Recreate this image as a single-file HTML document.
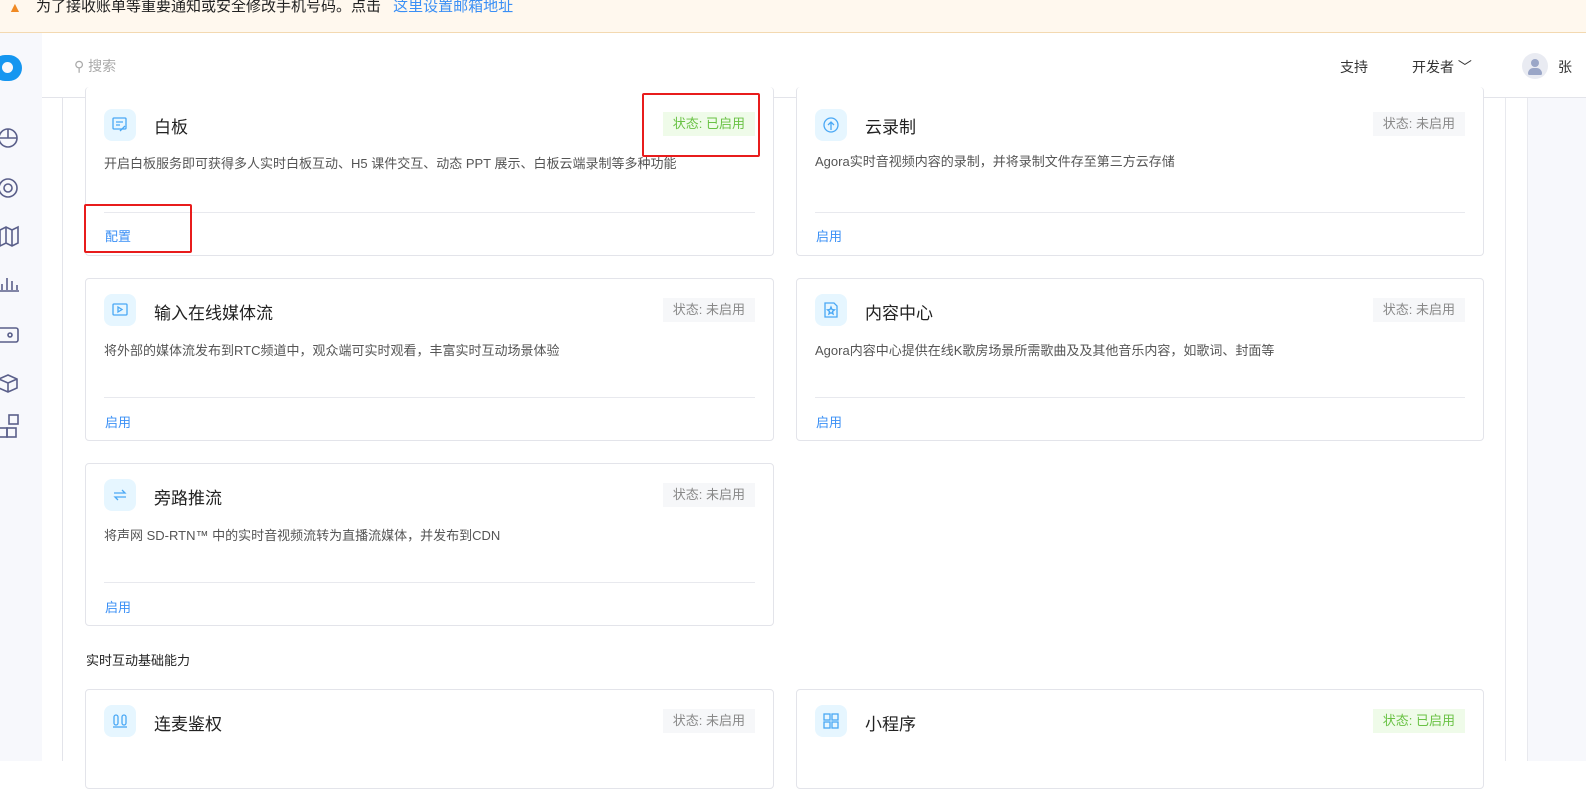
<!DOCTYPE html><html><head><meta charset="utf-8"><style>
*{margin:0;padding:0;box-sizing:border-box}
body{width:1586px;height:761px;overflow:hidden;background:#fff;font-family:"Liberation Sans","Noto Sans CJK SC",sans-serif;position:relative;color:#333}
.ban{position:absolute;left:0;top:0;width:1586px;height:33px;background:#fff8ee;border-bottom:1px solid #f3d9b1;font-size:15px;line-height:14px;padding-left:36px;color:#222}
.ban a{color:#3a8ff5;margin-left:8px}
.side{position:absolute;left:0;top:33px;width:42px;height:728px;background:#f7f8fc}
.hdr{position:absolute;left:42px;top:33px;right:0;height:65px;border-bottom:1px solid #e3e4ea;background:#fff}
.card{position:absolute;border:1px solid #e3e4ea;border-radius:4px;background:#fff}
.ic{position:absolute;left:18px;top:15px;width:32px;height:32px;border-radius:8px;background:#e6f6ff}
.ic svg{position:absolute;left:8px;top:8px}
.t{position:absolute;left:68px;top:20px;font-size:17px;color:#222}
.st{position:absolute;right:18px;top:19px;height:24px;padding:0 10px;font-size:13px;line-height:24px;background:#f6f7f9;color:#888}
.st.on{background:#effbe9;color:#69c244}
.d{position:absolute;left:18px;top:61px;font-size:13px;color:#555}
.ln{position:absolute;left:18px;right:18px;top:118px;border-top:1px solid #e8e9ee}
.a{position:absolute;left:19px;top:133px;font-size:13px;color:#3a8ff5}
.red{position:absolute;border:2px solid #e81c1c;border-radius:2px}
.sv{position:absolute;left:0}
</style></head><body>
<div class="ban"><span style="position:absolute;left:8px;top:0;color:#f08a24;font-size:14px">▲</span>为了接收账单等重要通知或安全修改手机号码。点击 <a>这里设置邮箱地址</a></div>
<div class="side">
<div style="position:absolute;left:-8px;top:22px;width:30px;height:26px;background:#1596f0;border-radius:13px"></div><div style="position:absolute;left:2px;top:29px;width:11px;height:11px;background:#f7f8fc;border-radius:6px"></div>
<svg class="sv" style="top:90px" width="24" height="330" fill="none" stroke="#5a5f8a" stroke-width="1.6">
<circle cx="8" cy="15" r="9"/><path d="M8 6v9h9M-1 15h9"/>
<circle cx="8" cy="65" r="9"/><circle cx="8" cy="65" r="4"/>
<path d="M0 107l6-3 6 3 6-3v16l-6 3-6-3-6 3zM6 104v16M12 107v16"/>
<path d="M0 168h19M2 167v-6M7 167v-12M12 167v-9M17 167v-5"/>
<rect x="-2" y="205" width="20" height="14" rx="2"/><circle cx="10" cy="212" r="2"/>
<path d="M8 252l9 4v9l-9 4-9-4v-9zM-1 256l9 4 9-4M8 260v9"/>
<rect x="-2" y="305" width="9" height="9"/><rect x="7" y="305" width="9" height="9"/><rect x="9" y="292" width="9" height="9"/>
</svg></div>
<div class="hdr">
<span style="position:absolute;left:32px;top:23px;font-size:14px;color:#aaa">⚲ 搜索</span>
<span style="position:absolute;left:1298px;top:24px;font-size:14px;color:#333">支持</span>
<span style="position:absolute;left:1370px;top:24px;font-size:14px;color:#333">开发者 ﹀</span>
<div style="position:absolute;left:1480px;top:20px;width:26px;height:26px;border-radius:13px;background:#e9ebf2"><div style="position:absolute;left:9px;top:6px;width:8px;height:8px;border-radius:4px;background:#9aa6c7"></div><div style="position:absolute;left:6px;top:15px;width:14px;height:7px;border-radius:7px 7px 2px 2px;background:#9aa6c7"></div></div>
<span style="position:absolute;left:1516px;top:24px;font-size:14px">张</span></div>
<div style="position:absolute;left:62px;top:98px;width:1px;height:663px;background:#e3e4ea"></div>
<div style="position:absolute;left:1505px;top:98px;width:1px;height:663px;background:#e8e9ee"></div>
<div style="position:absolute;left:1527px;top:98px;width:59px;height:663px;background:#f7f8fc;border-left:1px solid #e8e9ee"></div>

<div class="card" style="left:85px;top:87px;width:689px;height:169px;border-top:none"><div class="ic" style="top:22px"><svg width="16" height="16" fill="none" stroke="#4aa8f5" stroke-width="1.3"><rect x="1" y="1" width="13" height="11" rx="1"/><path d="M4 5h7M4 8h4M8 14l5-5"/></svg></div><div class="t" style="top:26px">白板</div><div class="st on" style="top:25px">状态: 已启用</div><div class="d" style="top:66px">开启白板服务即可获得多人实时白板互动、H5 课件交互、动态 PPT 展示、白板云端录制等多种功能</div><div class="ln" style="top:125px"></div><div class="a" style="top:139px">配置</div></div>
<div class="card" style="left:796px;top:87px;width:688px;height:169px;border-top:none"><div class="ic" style="top:22px"><svg width="16" height="16" fill="none" stroke="#4aa8f5" stroke-width="1.3"><circle cx="8" cy="8" r="7"/><path d="M8 13V5M5 8l3-3 3 3"/></svg></div><div class="t" style="top:26px">云录制</div><div class="st" style="top:25px">状态: 未启用</div><div class="d" style="top:64px">Agora实时音视频内容的录制，并将录制文件存至第三方云存储</div><div class="ln" style="top:125px"></div><div class="a" style="top:139px">启用</div></div>

<div class="card" style="left:85px;top:278px;width:689px;height:163px"><div class="ic"><svg width="16" height="16" fill="none" stroke="#4aa8f5" stroke-width="1.3"><rect x="1" y="2" width="14" height="11" rx="1"/><path d="M6 5v5l4-2.5z"/></svg></div><div class="t">输入在线媒体流</div><div class="st">状态: 未启用</div><div class="d">将外部的媒体流发布到RTC频道中，观众端可实时观看，丰富实时互动场景体验</div><div class="ln"></div><div class="a">启用</div></div>
<div class="card" style="left:796px;top:278px;width:688px;height:163px"><div class="ic"><svg width="16" height="16" fill="none" stroke="#4aa8f5" stroke-width="1.3"><path d="M2 1h9l3 3v11H2z"/><path d="M8 5l1 2.5 2.5.3-2 1.7.6 2.5L8 10.7 5.9 12l.6-2.5-2-1.7L7 7.5z"/></svg></div><div class="t">内容中心</div><div class="st">状态: 未启用</div><div class="d">Agora内容中心提供在线K歌房场景所需歌曲及及其他音乐内容，如歌词、封面等</div><div class="ln"></div><div class="a">启用</div></div>
<div class="card" style="left:85px;top:463px;width:689px;height:163px"><div class="ic"><svg width="16" height="16" fill="none" stroke="#4aa8f5" stroke-width="1.3"><path d="M2 6h11l-3-3M14 10H3l3 3"/></svg></div><div class="t">旁路推流</div><div class="st">状态: 未启用</div><div class="d">将声网 SD-RTN™ 中的实时音视频流转为直播流媒体，并发布到CDN</div><div class="ln"></div><div class="a">启用</div></div>
<div style="position:absolute;left:86px;top:650px;font-size:13px;color:#222">实时互动基础能力</div>
<div class="card" style="left:85px;top:689px;width:689px;height:100px"><div class="ic"><svg width="16" height="16" fill="none" stroke="#4aa8f5" stroke-width="1.3"><rect x="2" y="2" width="4" height="10" rx="2"/><rect x="10" y="2" width="4" height="10" rx="2"/><path d="M1 14h14"/></svg></div><div class="t">连麦鉴权</div><div class="st">状态: 未启用</div></div>
<div class="card" style="left:796px;top:689px;width:688px;height:100px"><div class="ic"><svg width="16" height="16" fill="none" stroke="#4aa8f5" stroke-width="1.3"><rect x="1" y="1" width="6" height="6"/><rect x="9" y="1" width="6" height="6"/><rect x="1" y="9" width="6" height="6"/><rect x="9" y="9" width="6" height="6"/></svg></div><div class="t">小程序</div><div class="st on">状态: 已启用</div></div>
<div class="red" style="left:642px;top:93px;width:118px;height:64px"></div>
<div class="red" style="left:84px;top:204px;width:108px;height:49px"></div>
</body></html>
